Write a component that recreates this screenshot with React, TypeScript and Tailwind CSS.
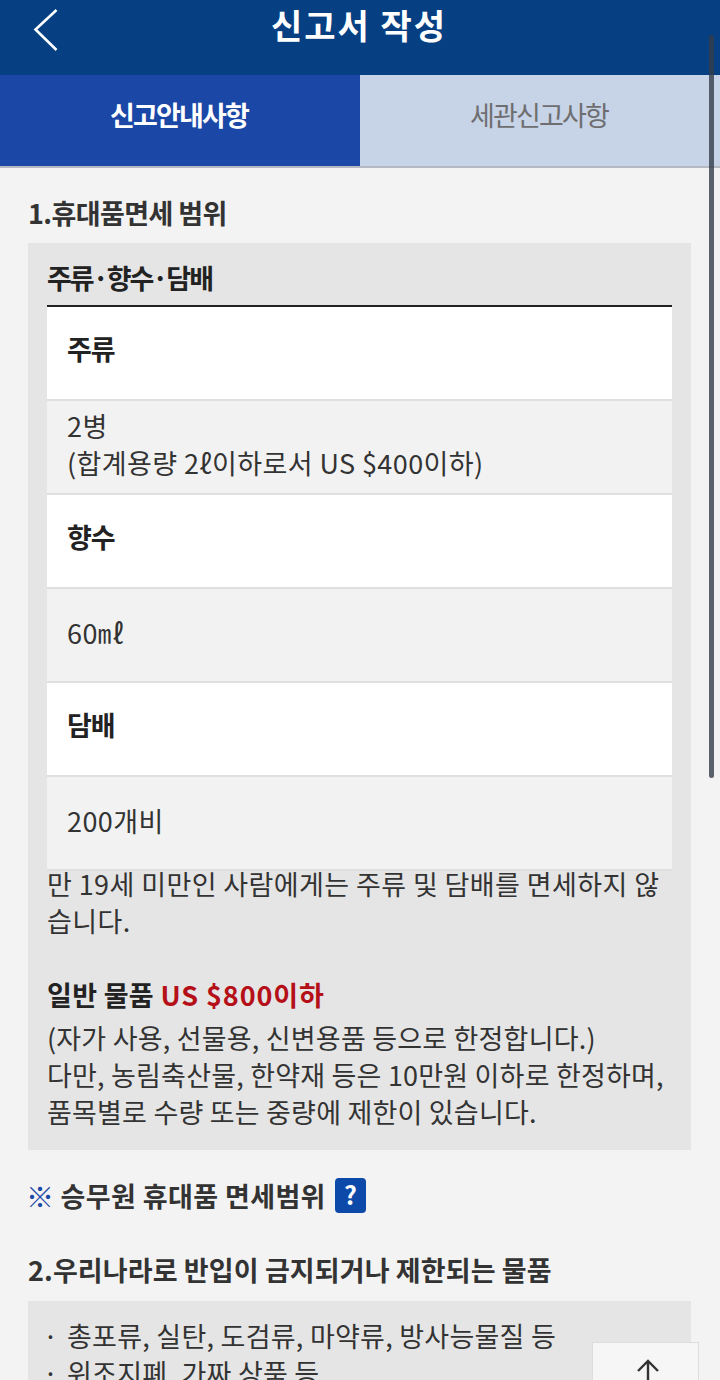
import React from "react";

function Header({ t }: { t: string }) {
  return (
    <div className="h-[94px] flex items-start pl-[20px] pt-[22px] bg-white border-b-2 border-[#dfdfdf]">
      <span className="text-[27px] leading-[40px] font-bold text-[#222] tracking-[-1px]">{t}</span>
    </div>
  );
}

function Value({ lines }: { lines: string[] }) {
  return (
    <div className="h-[94px] flex flex-col justify-center pl-[20px] pb-[6px] bg-[#f2f2f2] border-b-2 border-[#dfdfdf] last:border-b-0 text-[27px] leading-[37px] text-[#333] tracking-[0.4px]">
      {lines.map((l) => (
        <div key={l}>{l}</div>
      ))}
    </div>
  );
}

export default function App() {
  return (
    <div
      className="relative w-[720px] h-[1380px] overflow-hidden bg-[#f3f3f3]"
      style={{ fontFamily: '"Noto Sans CJK KR", "Noto Sans", sans-serif' }}
    >
      <header className="h-[75px] bg-[#064083] flex items-start justify-center relative">
        <svg className="absolute left-[32px] top-[8px]" width="28" height="44" viewBox="0 0 28 44" fill="none">
          <path d="M24.5 2 L3.5 21.5 L24.5 42" stroke="#ffffff" strokeWidth="2.6" />
        </svg>
        <h1 className="text-[34px] leading-[50px] font-bold text-white tracking-[2px] pr-[2px]">신고서 작성</h1>
      </header>

      <nav className="flex h-[93px] border-b-2 border-[#b5b9c2]">
        <div className="w-[360px] bg-[#1b47a7] flex items-center justify-center text-[27px] font-bold text-white tracking-[-1.8px] pb-[10px] pr-[2px]">
          신고안내사항
        </div>
        <div className="flex-1 bg-[#c7d3e6] flex items-center justify-center text-[27px] text-[#6e6e70] tracking-[-1.8px] pb-[10px] pr-[2px]">
          세관신고사항
        </div>
      </nav>

      <main className="pl-[28px] pr-[29px]">
        <h2 className="mt-[25px] h-[50px] text-[27px] leading-[40px] font-bold text-[#333] tracking-[-0.6px]">
          1.휴대품면세 범위
        </h2>

        <section className="bg-[#e5e5e5] px-[19px] pb-[20px] text-[#333]">
          <div className="h-[64px] pt-[15px] border-b-2 border-[#222] text-[27px] leading-[40px] font-bold text-[#222] tracking-[-2px]">
            주류·향수·담배
          </div>
          <Header t="주류" />
          <Value lines={["2병", "(합계용량 2ℓ이하로서 US $400이하)"]} />
          <Header t="향수" />
          <Value lines={["60㎖"]} />
          <Header t="담배" />
          <Value lines={["200개비"]} />
          <p className="-mt-[6px] text-[27px] leading-[37px] tracking-[0.4px] text-[#333]">
            만 19세 미만인 사람에게는 주류 및 담배를 면세하지 않습니다.
          </p>
          <p className="mt-[37px] text-[27px] leading-[37px] font-bold text-[#222] tracking-[0.3px]">
            일반 물품 <span className="text-[#b50f18] tracking-[0.9px]">US $800이하</span>
          </p>
          <p className="mt-[6px] text-[27px] leading-[37px] tracking-[0.2px] text-[#333]">
            (자가 사용, 선물용, 신변용품 등으로 한정합니다.)
            <br />
            다만, 농림축산물, 한약재 등은 10만원 이하로 한정하며, 품목별로 수량 또는 중량에 제한이 있습니다.
          </p>
        </section>

        <div className="mt-[26px] flex items-center h-[40px] text-[27px] font-bold text-[#333] tracking-[0.4px]">
          <span className="text-[#1b47a7] mr-[6px] text-[28px] -ml-[2px]">※</span>
          <span>승무원 휴대품 면세범위</span>
          <span className="ml-[9px] -mt-[2px] w-[31px] h-[35px] rounded-[4px] bg-[#0c49a8] text-white text-[25px] font-bold flex items-center justify-center tracking-normal">
            ?
          </span>
        </div>

        <h2 className="mt-[34px] h-[51px] text-[27px] leading-[40px] font-bold text-[#333] tracking-[0.1px]">
          2.우리나라로 반입이 금지되거나 제한되는 물품
        </h2>

        <section className="bg-[#e5e5e5] px-[19px] pt-[16px] text-[27px] leading-[37px] text-[#333] tracking-[0.25px]">
          <div className="flex">
            <span className="w-[24px] -ml-[4px]">·</span>
            <span>총포류, 실탄, 도검류, 마약류, 방사능물질 등</span>
          </div>
          <div className="flex">
            <span className="w-[24px] -ml-[4px]">·</span>
            <span>위조지폐, 가짜 상품 등</span>
          </div>
        </section>
      </main>

      <div className="absolute left-[709px] top-[35px] w-[5px] h-[743px] rounded-full bg-[#333c4a]/80" />

      <button className="absolute left-[592px] top-[1342px] w-[107px] h-[70px] bg-[#f6f6f6] border border-[#dddddd] flex justify-center pt-[16px] pl-[4px]">
        <svg width="26" height="26" viewBox="0 0 26 26" fill="none">
          <path d="M13 25 V2 M3 12 L13 2 L23 12" stroke="#333333" strokeWidth="2.4" />
        </svg>
      </button>
    </div>
  );
}
